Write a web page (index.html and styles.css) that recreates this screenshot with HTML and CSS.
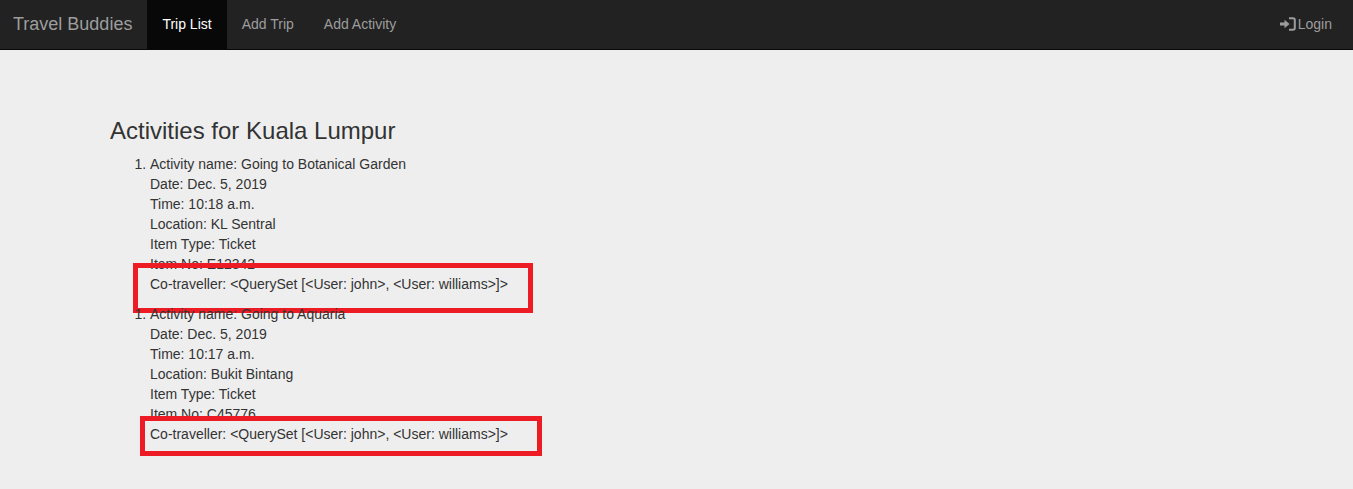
FILE: index.html
```html
<!DOCTYPE html>
<html lang="en">
<head>
    <meta charset="UTF-8">
    <meta name="viewport" content="width=device-width, initial-scale=1.0">
    <title>Travel Buddies</title>
    <link rel="stylesheet" href="styles.css">
</head>
<body>
    <nav class="navbar">
        <a class="brand" href="#">Travel Buddies</a>
        <ul class="nav-links">
            <li><a class="active" href="#">Trip List</a></li>
            <li><a href="#">Add Trip</a></li>
            <li><a href="#">Add Activity</a></li>
        </ul>
        <a class="login" href="#">
            <svg class="login-icon" viewBox="0 0 16 14" width="16" height="14" aria-hidden="true">
                <path d="M0 5.5h4.5V2.8L9.6 7l-5.100 4.200V8.500H0z" fill="currentColor"/>
                <path d="M9 1.200h4a1.800 1.800 0 0 1 1.800 1.800v8a1.800 1.800 0 0 1-1.800 1.800H9" fill="none" stroke="currentColor" stroke-width="2"/>
            </svg>Login
        </a>
    </nav>
    <div class="content">
        <h2>Activities for Kuala Lumpur</h2>
        <ol class="activity first">
            <li>
                Activity name: Going to Botanical Garden<br>
                Date: Dec. 5, 2019<br>
                Time: 10:18 a.m.<br>
                Location: KL Sentral<br>
                Item Type: Ticket<br>
                Item No: E12342<br>
                Co-traveller: &lt;QuerySet [&lt;User: john&gt;, &lt;User: williams&gt;]&gt;
            </li>
        </ol>
        <ol class="activity second">
            <li>
                Activity name: Going to Aquaria<br>
                Date: Dec. 5, 2019<br>
                Time: 10:17 a.m.<br>
                Location: Bukit Bintang<br>
                Item Type: Ticket<br>
                Item No: C45776<br>
                Co-traveller: &lt;QuerySet [&lt;User: john&gt;, &lt;User: williams&gt;]&gt;
            </li>
        </ol>
    </div>
</body>
</html>
```

FILE: styles.css
```css
* {
    box-sizing: border-box;
}
body {
    font-family: "Liberation Sans", Arial, sans-serif;
    font-size: 14px;
    line-height: 20px;
    margin: 0;
    min-height: 100vh;
    background-color: #eeeeee;
    color: #333333;
}
a {
    text-decoration: none;
}
.navbar {
    display: flex;
    align-items: stretch;
    height: 50px;
    background-color: #222222;
    border-bottom: 1px solid #080808;
}
.brand {
    color: #9d9d9d;
    font-size: 18px;
    padding: 14px 15px 0 13px;
    line-height: 20px;
}
.nav-links {
    display: flex;
    list-style: none;
    margin: 0;
    padding: 0;
}
.nav-links a {
    display: block;
    height: 49px;
    padding: 14px 15px;
    color: #9d9d9d;
}
.nav-links a.active {
    color: #ffffff;
    background-color: #080808;
}
.login {
    margin-left: auto;
    padding: 14px 21px 0 0;
    color: #9d9d9d;
}
.login-icon {
    vertical-align: -2px;
    margin-right: 2px;
}
.content {
    padding: 68px 0 0 110px;
}
h2 {
    font-size: 24px;
    font-weight: 500;
    line-height: 26px;
    margin: 0 0 10px;
}
.activity {
    position: relative;
    margin: 0 0 10px;
    padding-left: 40px;
}
/* red boxes drawn over the screenshot */
.activity::after {
    content: "";
    position: absolute;
    box-sizing: border-box;
    border: 5px solid #ed1c24;
}
.first::after {
    left: 23px;
    top: 109px;
    width: 400px;
    height: 50px;
}
.second::after {
    left: 30px;
    top: 112px;
    width: 402px;
    height: 40px;
}
```
